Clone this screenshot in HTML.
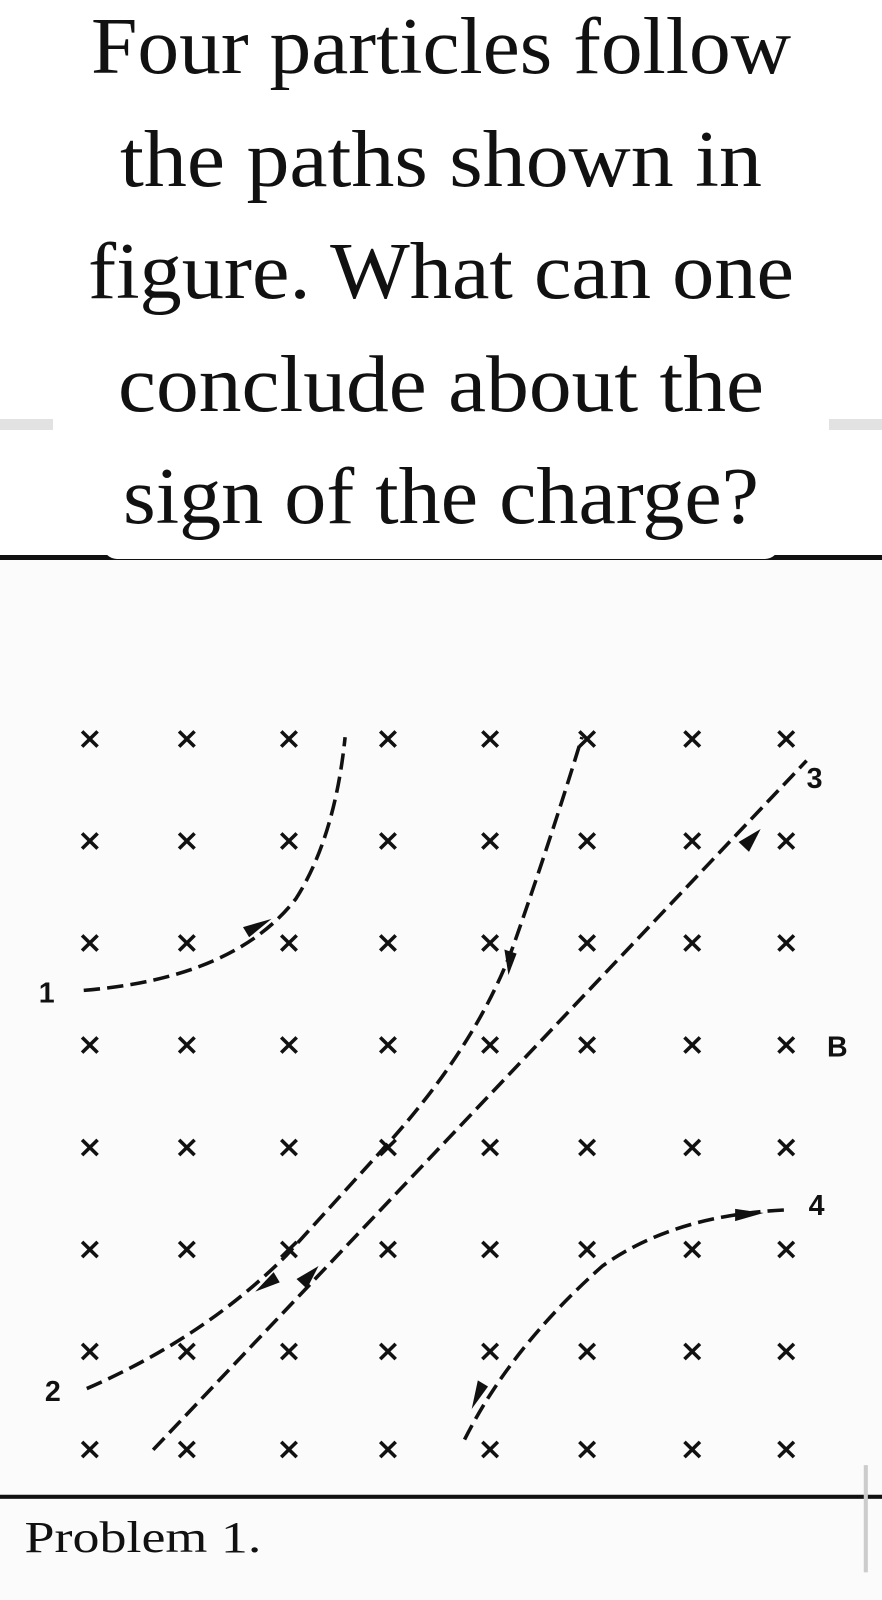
<!DOCTYPE html>
<html><head><meta charset="utf-8"><style>
html,body{margin:0;padding:0;width:882px;height:1600px;overflow:hidden;background:#fff}
svg{display:block}
</style></head><body>
<svg width="882" height="1600" viewBox="0 0 882 1600" xmlns="http://www.w3.org/2000/svg">
<rect width="882" height="1600" fill="#fff"/>
<rect x="0" y="558" width="882" height="1042" fill="#fbfbfb"/>
<rect x="0" y="419" width="53" height="11" fill="#e2e2e2"/>
<rect x="829" y="419" width="53" height="11" fill="#e2e2e2"/>
<rect x="0" y="555" width="882" height="5" fill="#111"/>
<rect x="103" y="380" width="676" height="179" rx="14" fill="#fff"/>
<g font-family="Liberation Serif, serif" font-size="80" fill="#111" text-anchor="middle">
<text x="441" y="73" textLength="700" lengthAdjust="spacingAndGlyphs">Four particles follow</text>
<text x="441" y="186" textLength="642" lengthAdjust="spacingAndGlyphs">the paths shown in</text>
<text x="441" y="298" textLength="706" lengthAdjust="spacingAndGlyphs">figure. What can one</text>
<text x="441" y="411" textLength="646" lengthAdjust="spacingAndGlyphs">conclude about the</text>
<text x="441" y="523" textLength="636" lengthAdjust="spacingAndGlyphs">sign of the charge?</text>
</g>
<g transform="scale(1.021)">
<g font-family="DejaVu Sans, sans-serif" font-weight="bold" font-size="30" fill="#111" text-anchor="middle">
<text x="88" y="733">×</text><text x="183" y="733">×</text><text x="283" y="733">×</text><text x="380" y="733">×</text><text x="480" y="733">×</text><text x="575" y="733">×</text><text x="678" y="733">×</text><text x="770" y="733">×</text>
<text x="88" y="833">×</text><text x="183" y="833">×</text><text x="283" y="833">×</text><text x="380" y="833">×</text><text x="480" y="833">×</text><text x="575" y="833">×</text><text x="678" y="833">×</text><text x="770" y="833">×</text>
<text x="88" y="933">×</text><text x="183" y="933">×</text><text x="283" y="933">×</text><text x="380" y="933">×</text><text x="480" y="933">×</text><text x="575" y="933">×</text><text x="678" y="933">×</text><text x="770" y="933">×</text>
<text x="88" y="1033">×</text><text x="183" y="1033">×</text><text x="283" y="1033">×</text><text x="380" y="1033">×</text><text x="480" y="1033">×</text><text x="575" y="1033">×</text><text x="678" y="1033">×</text><text x="770" y="1033">×</text>
<text x="88" y="1133">×</text><text x="183" y="1133">×</text><text x="283" y="1133">×</text><text x="380" y="1133">×</text><text x="480" y="1133">×</text><text x="575" y="1133">×</text><text x="678" y="1133">×</text><text x="770" y="1133">×</text>
<text x="88" y="1233">×</text><text x="183" y="1233">×</text><text x="283" y="1233">×</text><text x="380" y="1233">×</text><text x="480" y="1233">×</text><text x="575" y="1233">×</text><text x="678" y="1233">×</text><text x="770" y="1233">×</text>
<text x="88" y="1333">×</text><text x="183" y="1333">×</text><text x="283" y="1333">×</text><text x="380" y="1333">×</text><text x="480" y="1333">×</text><text x="575" y="1333">×</text><text x="678" y="1333">×</text><text x="770" y="1333">×</text>
<text x="88" y="1429">×</text><text x="183" y="1429">×</text><text x="283" y="1429">×</text><text x="380" y="1429">×</text><text x="480" y="1429">×</text><text x="575" y="1429">×</text><text x="678" y="1429">×</text><text x="770" y="1429">×</text>
</g>
<g fill="none" stroke="#111" stroke-width="3.5" stroke-dasharray="16,7">
<path d="M82,970 Q230,958 290,880 Q328,820 338,722"/>
<path d="M150,1420 L790,745"/>
<path d="M85,1360 Q200,1310 280,1230 L380,1120 Q470,1020 505,920 Q540,820 570,722"/>
<path d="M455,1410 Q500,1320 590,1240 Q660,1190 770,1185"/>
</g>
<g fill="#111">
<polygon points="266,900 244,918 238,908"/>
<polygon points="312,1240 300.6,1262.3 290.4,1252.7"/>
<polygon points="745,812 733.6,834.3 723.4,824.7"/>
<polygon points="498,955 494,930 506,934"/>
<polygon points="250,1265 268,1246 274,1256"/>
<polygon points="462,1380 468,1352 478,1358"/>
<polygon points="748,1188 720,1196 720,1184"/>
</g>
<g font-family="Liberation Sans, sans-serif" font-weight="bold" font-size="28" fill="#111">
<text x="38" y="982">1</text>
<text x="44" y="1372">2</text>
<text x="790" y="772">3</text>
<text x="792" y="1190">4</text>
<text x="810" y="1035">B</text>
</g>
<rect x="0" y="1464" width="864" height="4" fill="#111"/>
<rect x="846" y="1435" width="4" height="105" fill="#ccc"/>
<text x="24" y="1520" font-family="Liberation Serif, serif" font-size="44" fill="#111" textLength="232" lengthAdjust="spacingAndGlyphs">Problem 1.</text>
</g>
</svg>
</body></html>
